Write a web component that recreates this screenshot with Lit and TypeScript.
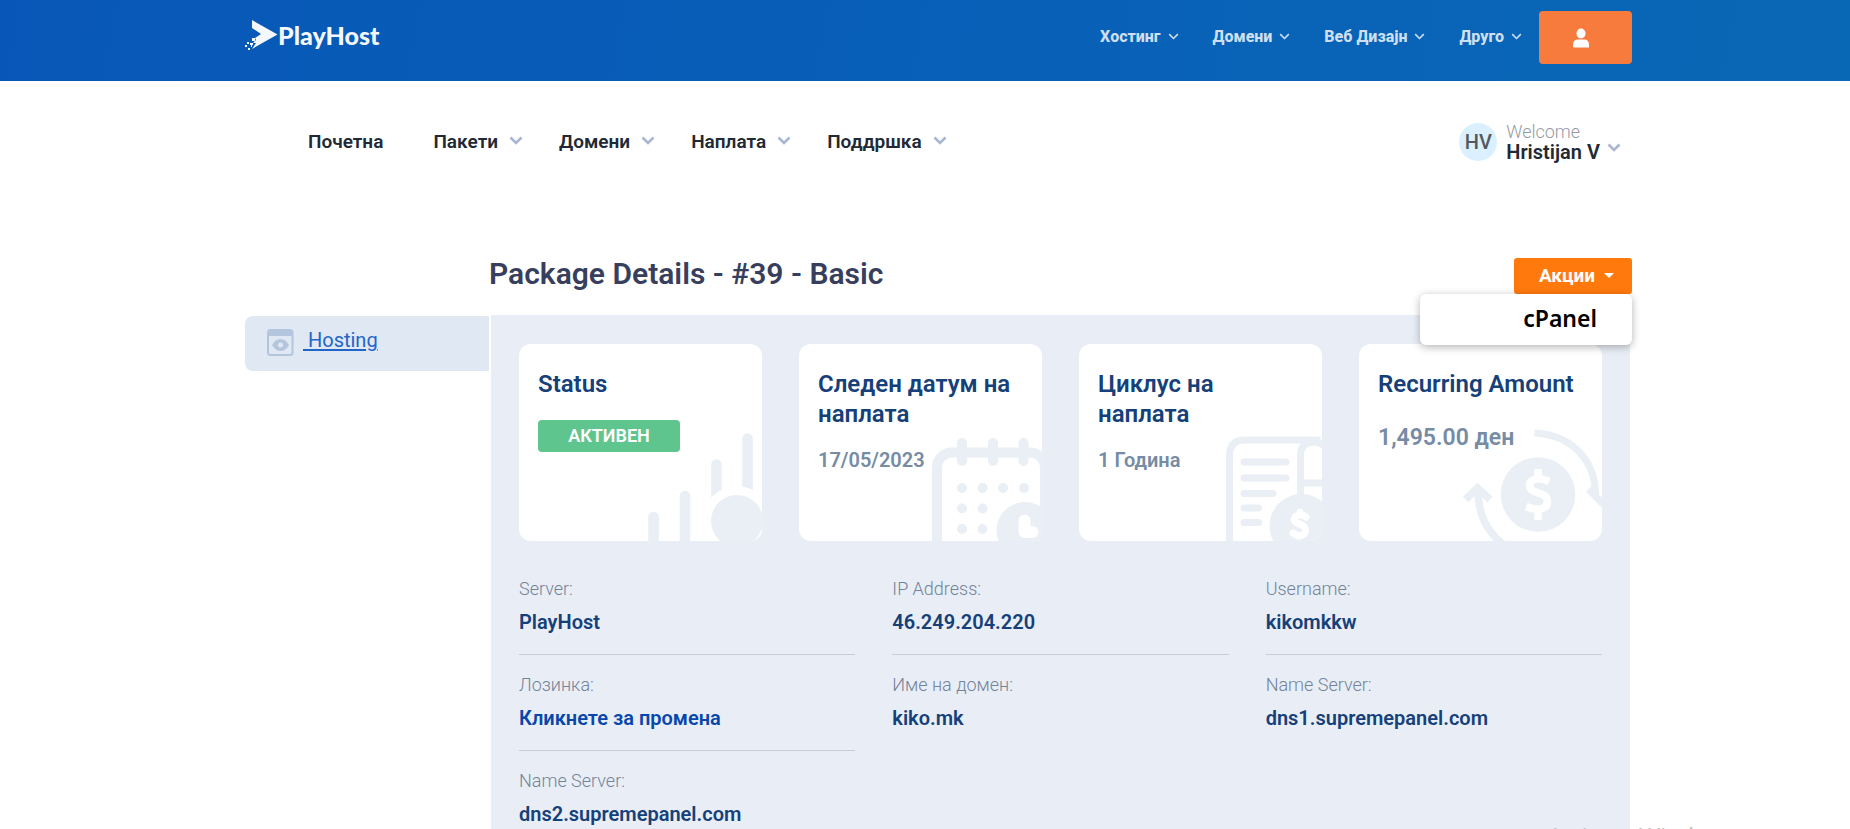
import { LitElement, html, css, svg } from "lit";
import { customElement } from "lit/decorators.js";

const chevron = html`<svg class="chevron" viewBox="0 0 14 9" aria-hidden="true">
  <path d="M1.500 1.500L7 7l5.500-5.500" />
</svg>`;

const siteLinks = ["Хостинг", "Домени", "Веб Дизајн", "Друго"];

const clientLinks = [
  { label: "Почетна", menu: false },
  { label: "Пакети", menu: true },
  { label: "Домени", menu: true },
  { label: "Наплата", menu: true },
  { label: "Поддршка", menu: true },
];

const details = [
  { label: "Server:", value: "PlayHost", line: true },
  { label: "IP Address:", value: "46.249.204.220", line: true },
  { label: "Username:", value: "kikomkkw", line: true },
  { label: "Лозинка:", value: "Кликнете за промена", line: true, link: true },
  { label: "Име на домен:", value: "kiko.mk", line: false },
  { label: "Name Server:", value: "dns1.supremepanel.com", line: false },
  { label: "Name Server:", value: "dns2.supremepanel.com", line: false },
];

const barsArt = svg`
  <g fill="none" stroke="#e9eff5" stroke-width="10.6" stroke-linecap="round">
    <path d="M15.5 85V140M47 64V140M78.500 32.500V140M109.500 6.500V140" />
  </g>
  <circle cx="99" cy="89" r="35" fill="#fff" />
  <circle cx="99" cy="89" r="26" fill="#e9eff5" />`;

const calendarArt = svg`
  <g fill="none" stroke="#e9eff5" stroke-width="10">
    <rect x="19" y="20.500" width="108" height="120" rx="15" />
    <path stroke-linecap="round" d="M44 11v18M75 11v18M105.500 11v18" />
  </g>
  <g fill="#e9eff5">
    <circle cx="44" cy="56" r="5" /><circle cx="64.500" cy="56" r="5" />
    <circle cx="85" cy="56" r="5" /><circle cx="106" cy="56" r="5" />
    <circle cx="44" cy="76.500" r="5" /><circle cx="64.500" cy="76.500" r="5" />
    <circle cx="44" cy="97" r="5" /><circle cx="64.500" cy="97" r="5" />
    <circle cx="107" cy="98.500" r="28.500" />
  </g>
  <path d="M106.500 88.500V100h8" fill="none" stroke="#fff" stroke-width="12" stroke-linecap="round" stroke-linejoin="round" />`;

const invoiceArt = svg`
  <g transform="translate(-1.500 0)">
    <g fill="none" stroke="#e9eff5" stroke-width="7">
      <path d="M33 140V24Q33 8 48 8h76M104 70V22Q105 11 116 10M104 51h30M116 10q8 0 12 4" />
      <path stroke-linecap="round" d="M47.500 30h42M47.500 46h42M47.500 61.500h29M47.500 76h14.500M47.500 90.500h14.500" />
    </g>
    <circle cx="105" cy="94" r="32" fill="#e9eff5" />
    <path d="M109.500 85q-5-4-10-1-4 4 1 7l5 2q6 4 2 9-5 4-11-1M103.500 81v-1" fill="none" stroke="#fff" stroke-width="7" stroke-linecap="round" />
  </g>`;

const cycleArt = svg`
  <g transform="translate(-1.500 0)">
    <circle cx="61.500" cy="62.500" r="37.300" fill="#e9eff5" />
    <path d="M58 1c38 2 61 28 61 62" fill="none" stroke="#e9eff5" stroke-width="7" />
    <path d="M112 57l12.500 13 13-13" fill="none" stroke="#e9eff5" stroke-width="7" />
    <path d="M1.500 58c0 24 8 41 27 56" fill="none" stroke="#e9eff5" stroke-width="7.500" />
    <path d="M-11 67.500L1 56l12.500 11.500" fill="none" stroke="#e9eff5" stroke-width="7.500" />
    <path d="M72.500 49.500q-9-4-15-2-6 3-4 8 1 3 7 5 8 2 10 6 2 8-5 10-6 2-16-2M61.500 37v8M61.500 78v10" fill="none" stroke="#fff" stroke-width="7.500" />
  </g>`;

@customElement("status-card")
export class StatusCard extends LitElement {
  static properties = { heading: {}, art: { attribute: false } };
  declare heading: string;
  declare art: unknown;

  static styles = css`
    :host {
      display: block;
      position: relative;
      overflow: hidden;
      box-sizing: border-box;
      min-height: 197px;
      padding: 25px 20px 0 19px;
      border-radius: 12px;
      background: #fff;
    }
    .title {
      position: relative;
      z-index: 1;
      margin: 0 0 18px;
      font-size: 24px;
      line-height: 30px;
      font-weight: 600;
      color: #154079;
    }
    .body {
      display: flow-root;
      position: relative;
      z-index: 1;
    }
    .art {
      position: absolute;
      right: 0;
      bottom: 0;
      width: 124px;
      height: 109px;
      overflow: visible;
    }
  `;

  render() {
    return html`
      <svg class="art" viewBox="0 0 124 109" aria-hidden="true">${this.art}</svg>
      <h2 class="title">${this.heading}</h2>
      <div class="body"><slot></slot></div>
    `;
  }
}

@customElement("app-root")
export class AppRoot extends LitElement {
  static styles = css`
    :host {
      display: block;
      position: relative;
      height: 100vh;
      overflow: hidden;
      background: #fff;
      font-family: Roboto, "Liberation Sans", sans-serif;
      color: #212934;
    }
    a {
      color: inherit;
      text-decoration: none;
    }
    button {
      border: 0;
      margin: 0;
      font-family: inherit;
      cursor: pointer;
    }
    .wrap {
      padding: 0 218px 0 245px;
    }
    .chevron {
      width: 14px;
      height: 9px;
      fill: none;
      stroke: currentColor;
      stroke-width: 2;
    }

    .site {
      display: flex;
      align-items: flex-start;
      justify-content: space-between;
      height: 81px;
      background: linear-gradient(100deg, #0857b8, #0968b6);
    }
    .logo {
      display: flex;
      align-items: center;
      margin-top: 19px;
      color: #f4f7fb;
      font: 900 25px/32px Lato, Roboto, sans-serif;
    }
    .logo svg {
      width: 33px;
      height: 32px;
    }
    .site-nav {
      display: flex;
      align-items: flex-start;
      margin-top: 11px;
    }
    .site-nav a {
      display: flex;
      align-items: center;
      gap: 7px;
      margin-right: 34px;
      font-size: 16px;
      line-height: 51px;
      font-weight: 800;
      color: #cddff1;
    }
    .site-nav a:nth-of-type(4) {
      margin-right: 17px;
    }
    .site-nav .chevron {
      width: 11px;
      stroke-width: 2;
    }
    .account {
      display: grid;
      place-items: center;
      width: 93px;
      height: 53px;
      padding: 0 9px 0 0;
      border-radius: 4px;
      background: #f87b3e;
    }
    .account svg {
      width: 16px;
      height: 20px;
      fill: #fff;
    }

    .client {
      display: flex;
      align-items: center;
      justify-content: space-between;
      height: 121px;
    }
    .client-nav {
      display: flex;
      gap: 36px;
      padding-left: 63px;
    }
    .client-nav a {
      display: flex;
      align-items: center;
      gap: 11px;
      font-size: 19px;
      line-height: 24px;
      font-weight: 600;
    }
    .client-nav a:first-child {
      margin-right: 14px;
    }
    .client-nav .chevron,
    .user .chevron {
      stroke: #a9b6d3;
      stroke-width: 2.6;
    }
    .client-nav .chevron {
      margin-bottom: 2px;
    }
    .user {
      display: flex;
      align-items: center;
      padding: 0 11px 0 0;
      background: none;
      color: inherit;
      text-align: left;
    }
    .avatar {
      width: 38px;
      margin-right: 9px;
      border-radius: 50%;
      background: #daf0fe;
      color: #55595e;
      font-size: 20px;
      line-height: 38px;
      font-weight: 500;
      text-align: center;
    }
    .who {
      display: grid;
      margin-right: 7px;
      font-size: 20px;
      line-height: 20px;
      font-weight: 600;
    }
    .hello {
      font-size: 18px;
      font-weight: 350;
      color: #959aa5;
    }
    .user .chevron {
      margin-top: 12px;
    }

    .heading {
      display: flex;
      align-items: flex-start;
      justify-content: space-between;
      height: 113px;
      padding-left: 244px;
      padding-top: 51px;
      box-sizing: border-box;
    }
    .heading h1 {
      margin: 0;
      font-size: 30px;
      line-height: 42px;
      font-weight: 600;
      color: #383f5e;
    }
    .actions {
      position: relative;
      margin-top: 5px;
    }
    .actions-toggle {
      display: flex;
      align-items: center;
      justify-content: center;
      gap: 9px;
      width: 118px;
      height: 36px;
      padding: 0 0 2px 7px;
      border-radius: 3px;
      background: #ff790d;
      color: #fff;
      font-size: 19px;
      font-weight: 700;
    }
    .caret {
      border: 5px solid transparent;
      border-top-color: #fff;
      border-bottom: 0;
    }
    .menu {
      position: absolute;
      z-index: 2;
      top: 36px;
      right: 0;
      box-sizing: border-box;
      width: 212px;
      padding: 0 35px 2px 0;
      border-radius: 6px;
      background: #fff;
      box-shadow: 0 2px 8px rgba(0, 0, 0, 0.3);
      color: #000;
      font: 600 23px/49px "Noto Sans", sans-serif;
      text-align: right;
    }
    .menu a {
      display: block;
    }

    .columns {
      display: grid;
      grid-template-columns: 244px 1fr;
      column-gap: 2px;
      align-items: start;
      padding-right: 2px;
    }
    .side {
      display: flex;
      align-items: center;
      box-sizing: border-box;
      height: 55px;
      margin-top: 1px;
      padding: 0 0 7px 22px;
      border-radius: 8px 0 0 8px;
      background: #e0e8f3;
      color: #2265c9;
      font-size: 20px;
      white-space: pre;
    }
    .side a {
      text-decoration: underline;
      text-underline-offset: 2px;
      text-decoration-thickness: 2px;
    }
    .side svg {
      width: 27px;
      height: 27px;
      margin: 5px 9px 0 0;
    }
    .panel {
      min-height: 520px;
      box-sizing: border-box;
      padding: 29px 28px;
      background: #e9eef6;
    }
    .cards {
      display: grid;
      grid-template-columns: repeat(4, 1fr);
      gap: 37px;
    }
    .badge {
      width: 142px;
      margin-top: 3px;
      border-radius: 4px;
      background: #5fc58e;
      color: #fff;
      font-size: 18px;
      line-height: 32px;
      font-weight: 600;
      text-align: center;
    }
    .meta {
      font-size: 20px;
      line-height: 26px;
      font-weight: 600;
      color: #768ba4;
    }
    .amount {
      padding-top: 8px;
      font-size: 23px;
    }
    .details {
      display: grid;
      grid-template-columns: repeat(3, 1fr);
      column-gap: 37px;
      margin: 18px 0 0;
    }
    .detail {
      box-sizing: border-box;
      height: 96px;
      padding-top: 18px;
      border-bottom: 1px solid transparent;
    }
    .ruled {
      border-color: #c6ced9;
    }
    .detail dt {
      font-size: 18px;
      line-height: 24px;
      font-weight: 350;
      color: #72839a;
    }
    .detail dd {
      margin: 8px 0 0;
      font-size: 20px;
      line-height: 26px;
      font-weight: 600;
      color: #154079;
    }
    .detail a {
      color: #0747ad;
    }
    .watermark {
      position: absolute;
      top: 823px;
      left: 1548px;
      color: #b9bcc0;
      font: 23px/26px "Open Sans", sans-serif;
      white-space: nowrap;
    }
    @media (max-width: 1500px) {
      .wrap {
        padding: 0 32px;
      }
    }
  `;

  render() {
    return html`
      <header class="site wrap">
        <a class="logo" href="#">
          <svg viewBox="0 0 33 32" fill="currentColor" aria-hidden="true">
            <path d="M7 1l25.500 14.500L7 30l4-6H8l3-3-1-2 6-4-9-6z" />
            <path d="M7 19h3v3H7zM2 23h2v2H2zM5 24h3v2H5zM0 26h2v2H0zM3 29h2v2H3zM6 26h1v2H6z" />
          </svg>
          <span>PlayHost</span>
        </a>
        <nav class="site-nav">
          ${siteLinks.map((l) => html`<a href="#">${l} ${chevron}</a>`)}
          <button class="account" aria-label="Account">
            <svg viewBox="0 0 16 20" aria-hidden="true">
              <ellipse cx="8" cy="5.500" rx="4.500" ry="5" />
              <path d="M0 17q0-5.500 5-5.500h6q5 0 5 5.500v2.500H0z" />
            </svg>
          </button>
        </nav>
      </header>

      <div class="client wrap">
        <nav class="client-nav">
          ${clientLinks.map((l) => html`<a href="#">${l.label}${l.menu ? chevron : ""}</a>`)}
        </nav>
        <button class="user">
          <span class="avatar">HV</span>
          <span class="who"><span class="hello">Welcome</span><span>Hristijan V</span></span>
          ${chevron}
        </button>
      </div>

      <main class="wrap">
        <div class="heading">
          <h1>Package Details - #39 - Basic</h1>
          <div class="actions">
            <button class="actions-toggle">Акции <span class="caret"></span></button>
            <div class="menu"><a href="#">cPanel</a></div>
          </div>
        </div>
        <div class="columns">
          <nav class="side">
            <svg viewBox="0 0 27 27" aria-hidden="true">
              <rect x="1" y="1" width="24.500" height="25" rx="2.500" fill="none" stroke="#b3c6dd" stroke-width="2" />
              <path d="M1 2h24.500v5H1z" fill="#b3c6dd" />
              <path d="M5 16q3.500-6 8.500-6t8.500 6q-3.500 6-8.500 6T5 16z" fill="#b3c6dd" />
              <circle cx="13.500" cy="16" r="2.500" fill="#e0e8f3" />
            </svg>
            <a href="#"> Hosting</a>
          </nav>
          <section class="panel">
            <div class="cards">
              <status-card heading="Status" .art=${barsArt}><div class="badge">АКТИВЕН</div></status-card>
              <status-card heading="Следен датум на наплата" .art=${calendarArt}><div class="meta">17/05/2023</div></status-card>
              <status-card heading="Циклус на наплата" .art=${invoiceArt}><div class="meta">1 Година</div></status-card>
              <status-card heading="Recurring Amount" .art=${cycleArt}><div class="meta amount">1,495.00 ден</div></status-card>
            </div>
            <dl class="details">
              ${details.map(
                (d) => html`<div class="detail ${d.line ? "ruled" : ""}">
                  <dt>${d.label}</dt>
                  <dd>${d.link ? html`<a href="#">${d.value}</a>` : d.value}</dd>
                </div>`
              )}
            </dl>
          </section>
        </div>
      </main>
      <div class="watermark">Activate Windows</div>
    `;
  }
}
